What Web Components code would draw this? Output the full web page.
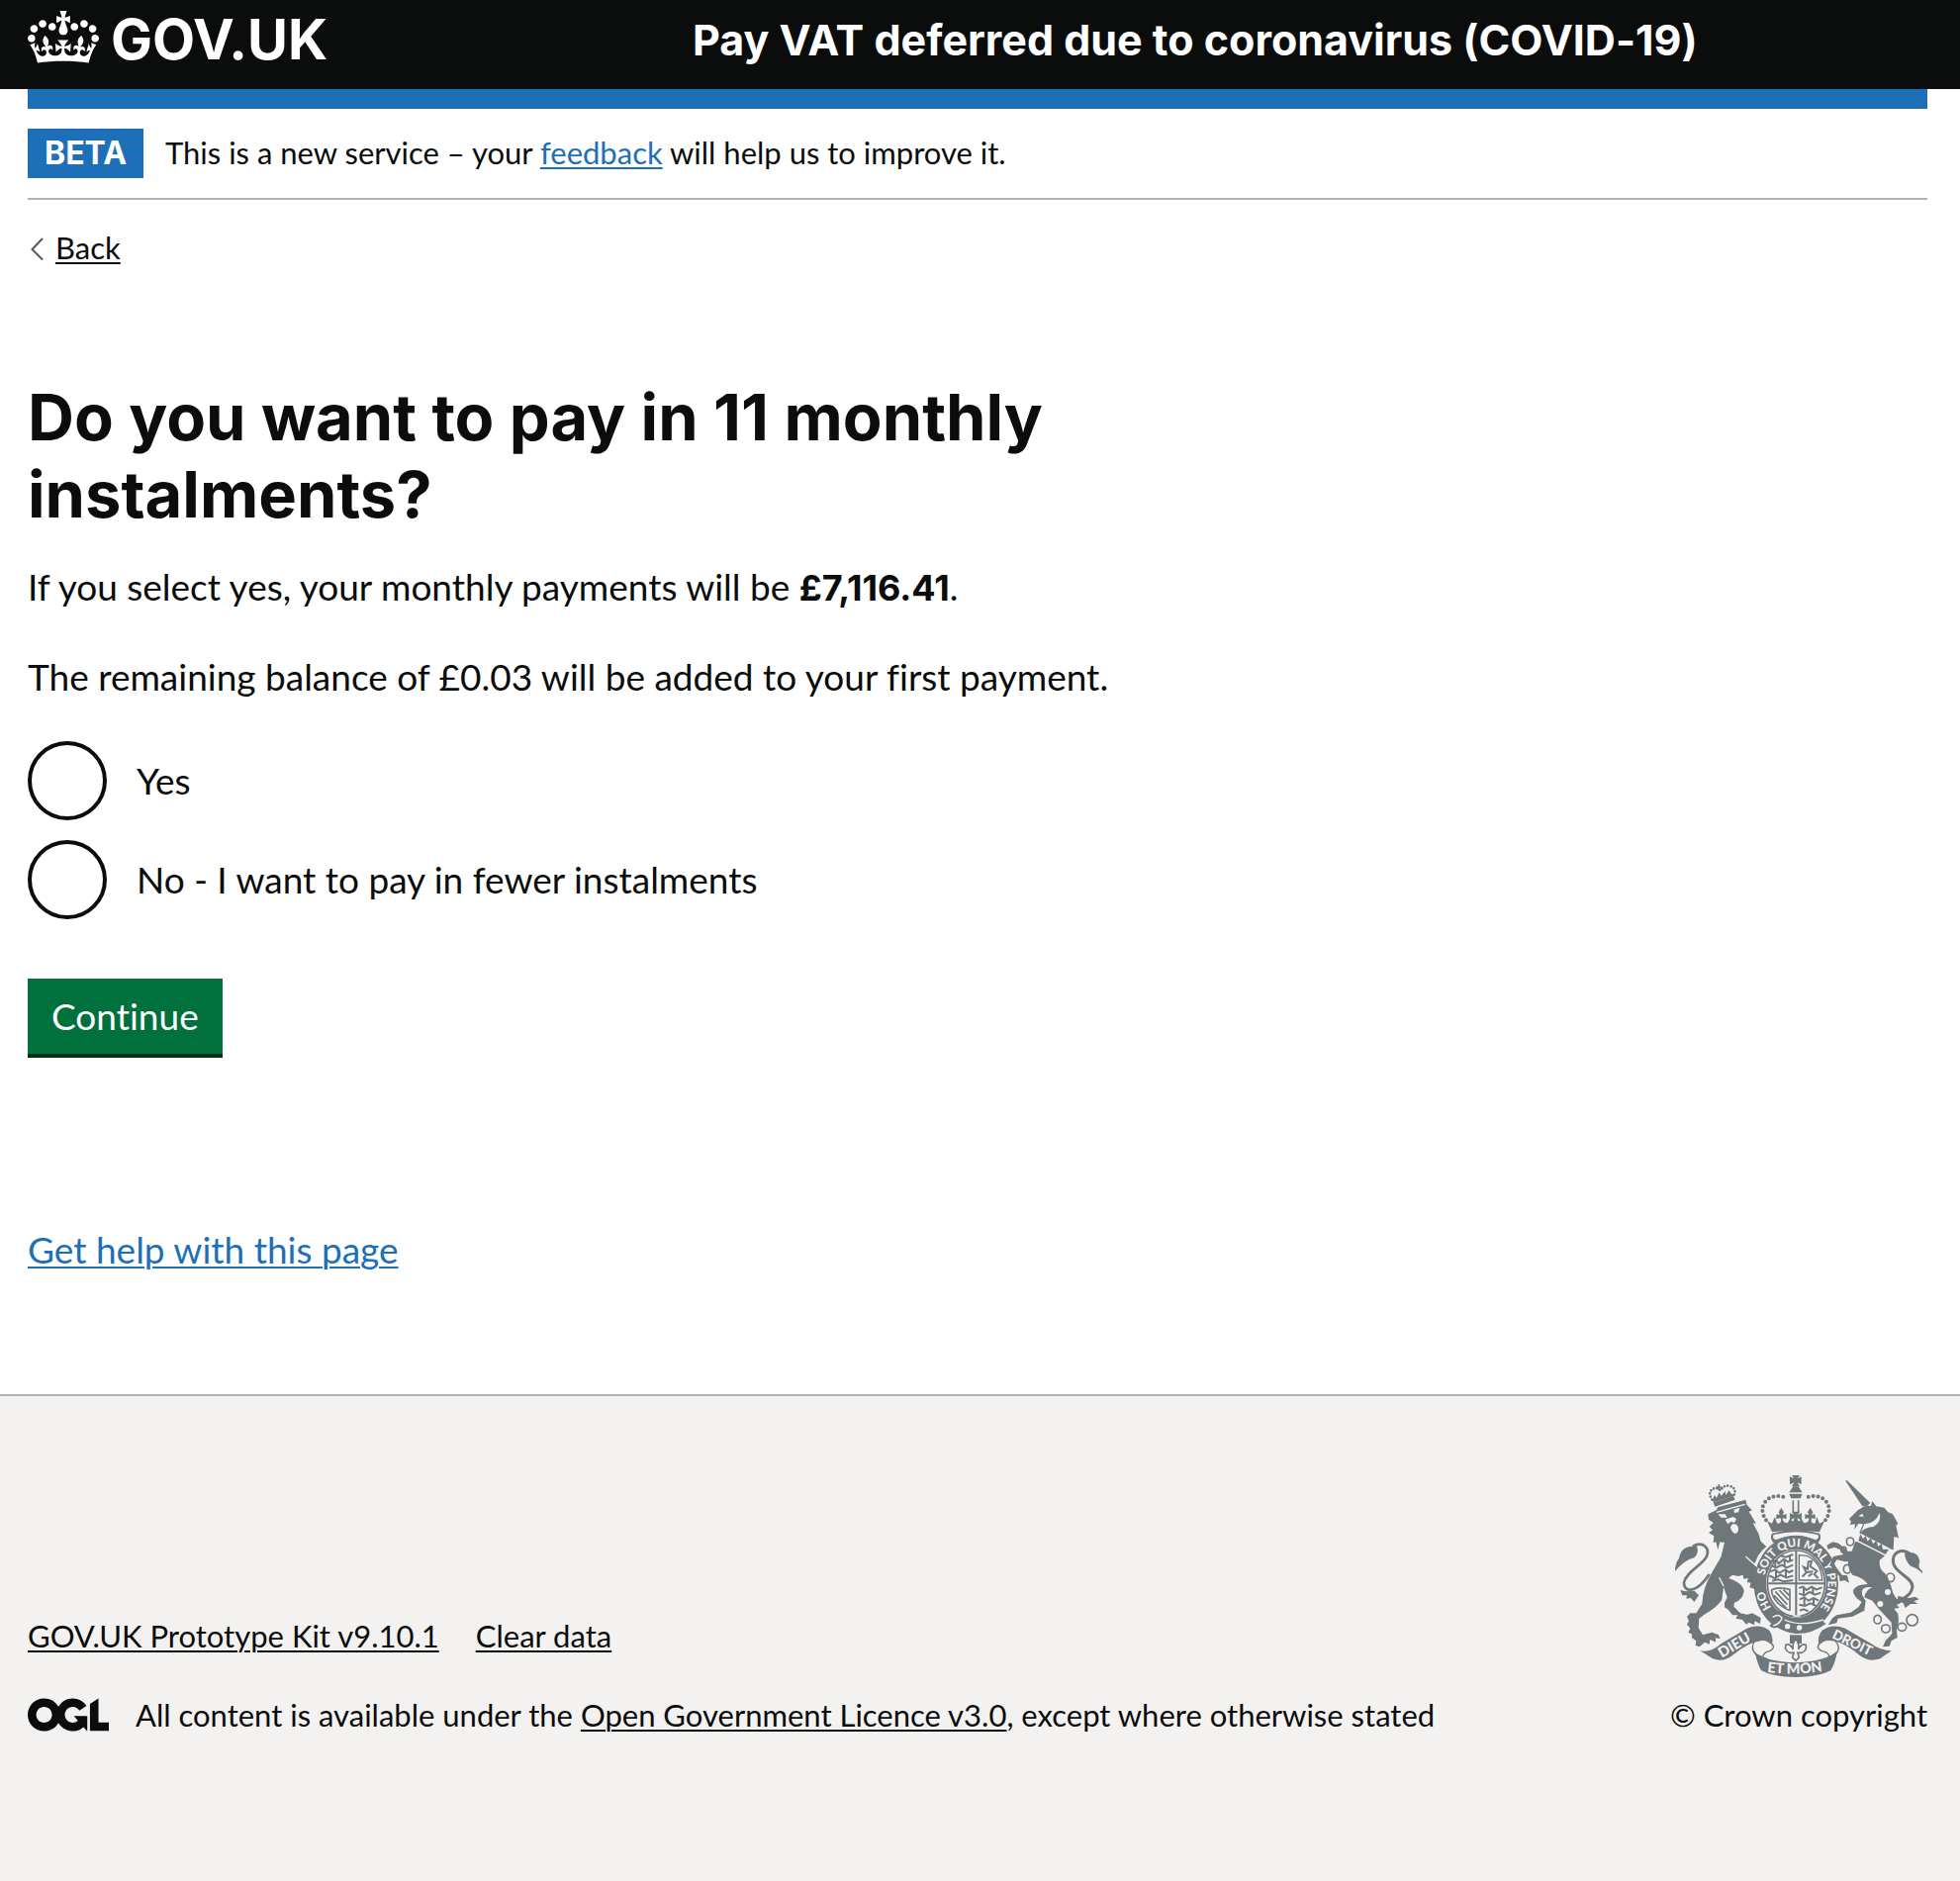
<!DOCTYPE html>
<html lang="en">
<head>
<meta charset="utf-8">
<meta name="viewport" content="width=device-width, initial-scale=1">
<title>Do you want to pay in 11 monthly instalments?</title>
<style>
  :root {
    --ink: #0b0c0c;
    --blue: #1d70b8;
    --green: #00703c;
    --rule: #b1b4b6;
    --panel: #f3f2f1;
    --bold: Inter, "Liberation Sans", sans-serif;
  }
  body {
    margin: 0;
    color: var(--ink);
    background: #fff;
    font-family: Lato, "Liberation Sans", sans-serif;
    font-size: 37px;
    font-variant-ligatures: none;
    line-height: 50px;
  }
</style>
</head>
<body>
<service-page>
  <service-header slot="header">Pay VAT deferred due to coronavirus (COVID-19)</service-header>
  <phase-banner></phase-banner>
  <back-link></back-link>
  <instalment-question>
    <span slot="title">Do you want to pay in 11 monthly instalments?</span>
    <radio-option name="instalments" value="yes">Yes</radio-option>
    <radio-option name="instalments" value="no">No - I want to pay in fewer instalments</radio-option>
  </instalment-question>
  <help-link>Get help with this page</help-link>
  <service-footer slot="footer"></service-footer>
</service-page>

<template id="service-page">
  <style>
    :host { display: flex; flex-direction: column; min-height: 100vh; }
    main { display: block; padding: 0 33px 0 28px; }
    slot[name=footer]::slotted(*) { flex: 1; }
  </style>
  <slot name="header"></slot>
  <main><slot></slot></main>
  <slot name="footer"></slot>
</template>

<template id="service-header">
  <style>
    :host { display: block; background: var(--ink); color: #fff; }
    header { display: flex; align-items: flex-end; padding: 11px 33px 26px 28px; font-family: var(--bold); font-weight: 700; line-height: 48px; }
    .brand { flex: 0 0 35%; }
    a { display: inline-flex; align-items: flex-end; gap: 12px; color: inherit; text-decoration: none; font-size: 56px; vertical-align: bottom; }
    svg { display: block; width: 72px; height: 53px; fill: currentColor; }
    .title { font-size: 43px; }
  </style>
  <header>
    <div class="brand">
      <a href="#"><svg viewBox="0 0 132 97" aria-hidden="true"><path fill-rule="evenodd" d="M25 30.2c3.5 1.5 7.7-.2 9.1-3.7 1.5-3.6-.2-7.8-3.9-9.2-3.6-1.4-7.6.3-9.1 3.9-1.4 3.5.3 7.5 3.9 9zM9 39.5c3.6 1.5 7.8-.2 9.2-3.7 1.5-3.6-.2-7.8-3.9-9.1-3.6-1.5-7.6.2-9.1 3.8-1.4 3.5.3 7.5 3.8 9zM4.4 57.2c3.5 1.5 7.7-.2 9.1-3.8 1.5-3.6-.2-7.7-3.9-9.1-3.5-1.5-7.6.3-9.1 3.8-1.4 3.5.3 7.6 3.9 9.1zm38.3-21.4c3.5 1.5 7.7-.2 9.1-3.8 1.5-3.6-.2-7.7-3.9-9.1-3.6-1.5-7.6.3-9.1 3.8-1.3 3.6.4 7.7 3.9 9.1zm64.4-5.6c-3.6 1.5-7.8-.2-9.1-3.7-1.5-3.6.2-7.8 3.8-9.2 3.6-1.4 7.7.3 9.2 3.9 1.3 3.5-.4 7.5-3.9 9zm15.9 9.3c-3.6 1.5-7.7-.2-9.1-3.7-1.5-3.6.2-7.8 3.7-9.1 3.6-1.5 7.7.2 9.2 3.8 1.5 3.5-.3 7.5-3.8 9zm4.7 17.7c-3.6 1.5-7.8-.2-9.2-3.8-1.5-3.6.2-7.7 3.9-9.1 3.6-1.5 7.7.3 9.2 3.8 1.3 3.5-.4 7.6-3.9 9.1zM89.3 35.8c-3.6 1.5-7.8-.2-9.2-3.8-1.4-3.6.2-7.7 3.9-9.1 3.6-1.5 7.7.3 9.2 3.8 1.4 3.6-.3 7.7-3.9 9.1zM69.7 17.7l8.9 4.7V9.3l-8.9 2.8c-.2-.3-.5-.6-.9-.9L72.4 0H59.6l3.5 11.2c-.3.3-.6.5-.9.9l-8.8-2.8v13.1l8.8-4.7c.3.3.6.7.9.9l-5 15.4v.1c-.2.8-.4 1.6-.4 2.4 0 4.1 3.1 7.5 7 8.1h.2c.3 0 .7.1 1 .1.4 0 .7 0 1-.1h.2c4-.6 7.1-4.1 7.1-8.1 0-.8-.1-1.7-.4-2.4V34l-5.1-15.4c.4-.2.7-.6 1-.9zM66 92.8c16.9 0 32.8 1.1 47.1 3.2 4-16.9 8.9-26.7 14-33.5l-9.6-3.4c1 4.9 1.1 7.2 0 10.2-1.5-1.4-3-4.3-4.2-8.7L108.6 76c2.8-2 5-3.2 7.5-3.3-4.4 9.4-10 11.9-13.6 11.2-4.3-.8-6.3-4.6-5.6-7.9 1-4.7 5.7-5.9 8-.5 4.3-8.7-3-11.4-7.6-8.8 7.1-7.2 7.9-13.5 2.1-21.1-8 6.1-8.1 12.3-4.5 20.8-4.7-5.4-12.1-2.5-9.5 6.2 3.4-5.2 7.9-2 7.2 3.1-.6 4.3-6.4 7.8-13.5 7.2-10.3-.9-10.9-8-11.2-13.8 2.5-.5 7.1 1.8 11 7.3L80.2 60c-4.1 4.4-8 5.3-12.3 5.4 1.4-4.4 8-11.6 8-11.6H55.5s6.4 7.2 7.9 11.6c-4.2-.1-8-1-12.3-5.4l1.4 16.4c3.9-5.5 8.5-7.7 10.9-7.3-.3 5.8-.9 12.8-11.1 13.8-7.2.6-12.9-2.9-13.5-7.2-.7-5 3.8-8.3 7.1-3.1 2.7-8.7-4.6-11.6-9.4-6.2 3.7-8.5 3.6-14.7-4.6-20.8-5.8 7.6-5 13.9 2.2 21.1-4.7-2.6-11.9.1-7.7 8.8 2.3-5.5 7.1-4.2 8.1.5.7 3.3-1.3 7.1-5.7 7.9-3.5.7-9-1.8-13.5-11.2 2.5.1 4.7 1.3 7.5 3.3l-4.7-15.4c-1.2 4.4-2.7 7.2-4.3 8.7-1.1-3-.9-5.3 0-10.2l-9.5 3.4c5 6.9 9.9 16.7 14 33.5 14.8-2.1 30.8-3.2 47.7-3.2z"/></svg><span>GOV.UK</span></a>
    </div>
    <div class="title"><slot></slot></div>
  </header>
</template>

<template id="phase-banner">
  <style>
    :host { display: block; border-top: 20px solid var(--blue); border-bottom: 2px solid var(--rule); padding: 20px 0; }
    div { display: flex; align-items: baseline; gap: 22px; }
    strong { padding: 0 17px; background: var(--blue); color: #fff; font: 700 32px/50px var(--bold); }
    span { font-size: 31px; line-height: 40px; }
    a { color: var(--blue); text-decoration-thickness: 2px; text-underline-offset: 3px; }
  </style>
  <div><strong>BETA</strong><span>This is a new service – your <a href="#">feedback</a> will help us to improve it.</span></div>
</template>

<template id="back-link">
  <style>
    :host { display: block; padding-top: 28px; font-size: 31px; line-height: 40px; }
    a { display: inline-flex; align-items: center; gap: 11px; padding-left: 3px; color: inherit; text-decoration: none; vertical-align: bottom; }
    span { text-decoration: underline 2px; text-underline-offset: 3px; }
    svg { width: 14px; height: 26px; fill: none; stroke: #505a5f; stroke-width: 2; }
  </style>
  <a href="#"><svg viewBox="0 0 14 26" aria-hidden="true"><path d="M12 4 1.500 15 12 25.500"/></svg><span>Back</span></a>
</template>

<template id="instalment-question">
  <style>
    :host { display: block; padding-top: 113px; }
    form, fieldset { margin: 0; padding: 0; border: 0; min-width: 0; }
    h1, p { margin: 0; max-width: 1250px; }
    h1 { padding-bottom: 29px; font: 700 65px/78px var(--bold); }
    p { padding-bottom: 40px; }
    b { font: 700 36px/50px var(--bold); }
    .options { display: flex; flex-direction: column; gap: 20px; padding-bottom: 60px; }
    button { display: block; border: 0; border-bottom: 4px solid #002d18; padding: 13px 24px; background: var(--green); color: #fff; font: inherit; font-variant-ligatures: none; cursor: pointer; }
  </style>
  <form>
    <fieldset aria-labelledby="title">
      <h1 id="title"><slot name="title"></slot></h1>
      <p>If you select yes, your monthly payments will be <b>£7,116.41</b>.</p>
      <p>The remaining balance of £0.03 will be added to your first payment.</p>
      <div class="options"><slot></slot></div>
    </fieldset>
    <button type="button">Continue</button>
  </form>
</template>

<template id="radio-option">
  <style>
    :host { display: block; }
    label { display: inline-flex; align-items: center; gap: 30px; vertical-align: bottom; cursor: pointer; }
    input { appearance: none; box-sizing: border-box; flex: none; width: 80px; height: 80px; margin: 0; border: 4px solid var(--ink); border-radius: 50%; background: #fff; }
    input:checked { background: radial-gradient(var(--ink) 0 20px, #fff 21px); }
  </style>
  <label><input type="radio"><slot></slot></label>
</template>

<template id="help-link">
  <style>
    :host { display: block; padding: 169px 0 121px; }
    a { color: var(--blue); text-decoration-thickness: 2px; text-underline-offset: 3px; }
  </style>
  <a href="#"><slot></slot></a>
</template>

<template id="service-footer">
  <style>
    :host { display: block; border-top: 2px solid var(--rule); background: var(--panel); font-size: 31px; line-height: 40px; }
    footer { display: flex; justify-content: space-between; align-items: flex-end; gap: 40px; padding: 80px 33px 80px 28px; }
    .meta { display: flex; flex-direction: column; gap: 40px; }
    nav { display: flex; gap: 37px; }
    .licence { display: flex; align-items: center; gap: 27px; }
    .licence svg { flex: none; width: 82px; height: 34px; fill: currentColor; }
    a { color: inherit; text-decoration-thickness: 2px; text-underline-offset: 3px; }
    .copyright { display: flex; flex-direction: column; align-items: center; gap: 18px; flex: none; text-decoration: none; }
  </style>
  <footer>
    <div class="meta">
      <nav><a href="#">GOV.UK Prototype Kit v9.10.1</a><a href="#">Clear data</a></nav>
      <div class="licence">
        <svg viewBox="0 0 483.2 195.7" aria-hidden="true"><path d="M421.5 142.8V.1l-50.7 32.3v161.1h112.4v-50.7zm-122.3-9.6A47.12 47.12 0 0 1 221 97.8c0-26 21.1-47.1 47.1-47.1 16.7 0 31.4 8.7 39.7 21.8l42.7-27.2A97.63 97.63 0 0 0 268.1 0c-36.5 0-68.3 20.1-85.1 49.7A98 98 0 0 0 97.800 0C43.900 0 0 43.900 0 97.800s43.900 97.800 97.800 97.800c36.500 0 68.300-20.100 85.100-49.700a97.760 97.760 0 0 0 149.600 25.400l19.400 22.200h3v-87.800h-80l24.300 27.500zM97.800 145c-26 0-47.100-21.100-47.100-47.100s21.100-47.100 47.100-47.100 47.100 21.100 47.100 47.100S123.800 145 97.800 145"/></svg>
        <span>All content is available under the <a href="#">Open Government Licence v3.0</a>, except where otherwise stated</span>
      </div>
    </div>
    <a class="copyright" href="#"><royal-arms></royal-arms><span>© Crown copyright</span></a>
  </footer>
</template>

<template id="royal-arms">
  <style>
    :host { display: block; color: #6f777b; }
    svg { display: block; width: 250px; height: 204px; }
    text { font-family: Lato, "Liberation Sans", sans-serif; font-weight: 900; }
    .solid { fill: currentColor; }
    .line { fill: none; stroke: currentColor; }
    .paper { fill: var(--panel); }
    .cut { fill: none; stroke: var(--panel); }
  </style>
  <svg viewBox="66 60 750 612" aria-hidden="true">
    <!-- lion -->
    <g class="solid">
      <path d="M166 178 192 165 195 157 280 134 284 150 300 166 290 170 312 206 302 205 319 236 326 260 343 276 330 288 318 304 306 330 330 352 342 385 344 408 334 404 328 418 320 406 312 416 306 404 292 400 296 386 284 384 288 372 274 374 272 362 258 366 240 362 228 372Q274 388 275 412 272 438 246 446L244 458 264 478 285 482 300 478 326 492 324 510 308 502 306 514 290 506 282 512 270 498 250 494 256 484 240 484 228 468 216 460 216 446 224 430 213 398 208 438Q190 462 158 480L139 494 137 522 150 544 178 536 198 544 203 556 188 553 190 566 172 558 170 572 156 566 140 580 128 576 130 562 116 552 118 542 106 536 112 524 102 512 108 502 102 488 112 478 130 478 148 450Q150 400 178 354L205 308 216 264 202 262 196 286 190 262 182 264 184 244 168 234 180 226 170 216 182 204 168 194Z"/>
      <path d="M66 351Q66 325 78 312 84 272 132 275 140 294 124 310 96 316 66 351Z"/>
      <path d="M82 408 98 412 125 410 138 424 124 444 114 432 100 434 102 424 88 424Z"/>
      <path d="M182 142 243 123 248 134 187 155Z"/>
      <path d="M180 132 186 120 192 128 200 112 206 122 218 108 220 120 230 106 238 118 244 116 246 122 182 142Z"/>
    </g>
    <g class="line" stroke-width="8">
      <path d="M120 275C150 258 172 280 162 305S100 352 93 385C92 416 130 420 170 360"/>
      <path stroke-width="8" stroke-dasharray="0 10" stroke-linecap="round" d="M178 134Q162 108 186 99 196 98 204 106 212 90 230 92 254 98 245 120"/>
      <path stroke-width="5" d="M199 87V106M190 96H208"/>
    </g>
    <g class="paper">
      <path d="M196 178 218 178 224 188 206 188ZM244 164 262 158 258 172 246 174ZM218 194 242 186 252 192 246 204 236 200 226 208ZM240 208Q258 206 258 224 256 238 246 236 236 230 234 216Z"/>
    </g>
    <g class="cut" stroke-width="4"><path d="M280 306 320 342 340 372M192 172 278 148M213 396 200 370"/></g>

    <!-- central crown -->
    <g class="line">
      <path stroke-width="12" stroke-dasharray="0 15" stroke-linecap="round" d="M342 196Q322 166 338 142 360 112 408 130"/>
      <path stroke-width="12" stroke-dasharray="0 15" stroke-linecap="round" d="M522 196Q542 166 526 142 504 112 456 130"/>
      <path stroke-width="5" d="M424 136V172M440 136V172"/>
    </g>
    <g class="solid">
      <path d="M420 60H444L437 70 449 64V88L437 82 444 94H420L427 82 414 88V64L427 70Z"/>
      <path d="M424 94H440L452 112H412ZM412 116H452L446 130H418Z"/>
      <path d="M345 198 360 206 368 186 376 206Q392 206 386 190L372 192 374 178 384 180 380 172 388 158 396 172 392 180 404 178 404 192 392 190Q392 206 408 204L414 192 424 200 428 188 414 198V174L426 180 420 170H444L438 180 450 174V198L436 188 440 200 450 192 456 204Q472 206 472 190L460 192V178L472 180 468 172 476 158 484 172 480 180 490 178 492 192 480 190Q476 206 490 206L496 186 504 206 519 198 504 232Q432 222 360 232Z"/>
    </g>
    <path class="solid" fill-rule="evenodd" d="M360 236Q432 216 504 236 514 250 496 268 432 234 368 268 350 250 360 236ZM366 240Q358 248 371 256 432 228 493 256 506 248 498 240 432 224 366 240Z"/>

    <!-- garter and shield -->
    <ellipse class="solid" cx="433" cy="390" rx="128" ry="147"/>
    <ellipse class="paper" cx="433" cy="388" rx="91" ry="104"/>
    <ellipse class="line" cx="433" cy="388" rx="87" ry="100" stroke-width="5"/>
    <path class="line" stroke-width="6" d="M433 288V490M345 388H521"/>
    <g class="line" stroke-width="6">
      <path d="M362 322 374 318 380 328 396 314 408 322 424 316M360 334 372 340 390 332 404 340 424 332M354 352 370 346 382 356 400 346 412 354 424 348M352 364 368 372 386 362 404 370 424 364M360 380 378 376 396 382 424 378M386 304 402 308 424 300M370 322V338M398 318V336M372 350V368M402 348V368M414 302V320"/>
      <path d="M442 402 454 398 464 408 480 398 494 406 512 400M442 418 458 424 474 414 490 422 508 416M444 436 458 430 470 440 486 432 502 440M442 452 460 456 476 448 494 456M444 470 456 466 470 472M456 402V420M484 402V420M458 434V452M486 434V452"/>
      <path stroke-width="4" d="M442 302 466 304Q510 324 512 378H442Z"/>
      <path d="M452 368 464 354 456 338 468 344 470 322 480 320 476 336 496 350 488 360 500 372M464 354 484 352M470 366 482 358"/>
      <path stroke-width="5" d="M358 408Q378 396 414 406V470M414 470Q364 450 358 408M370 412 406 452M382 408 410 438M394 406 412 424M366 424 404 464"/>
    </g>
    <defs>
      <path id="garter" d="M358 461A97 112 0 1 1 492 477"/>
      <path id="dieu" d="M208 614 314 552"/>
      <path id="droit" d="M540 552 672 616"/>
      <path id="mon" d="M345 656Q432 668 524 652"/>
    </defs>
    <text class="paper" font-size="35" dx="0 0 0 38"><textPath href="#garter">HO SOIT QUI MAL Y PENSE</textPath></text>
    <path class="solid" d="M356 488 380 470Q404 478 400 500 450 520 512 502L524 510Q480 542 432 540 400 538 380 520 362 528 352 516L366 502Z"/>
    <path class="cut" stroke-width="4" d="M362 490Q380 478 390 492 386 510 364 516M398 498Q446 520 516 498M424 486H446"/>
    <circle class="paper" cx="407" cy="518" r="8"/><circle class="paper" cx="443" cy="522" r="8"/>

    <!-- unicorn -->
    <g class="solid">
      <path d="M582 76 588 76 658 144 648 154 634 154Z"/>
      <path d="M660 152 664 138 676 154 700 158 712 172 726 178 742 206 736 212 744 250 730 246 728 286 714 282 624 236 636 208 622 206 610 224 612 208 596 210 600 200 594 192 620 166 640 154Z"/>
      <path d="M620 262 702 304 686 318Q684 346 702 356 714 370 722 400 724 416 736 432L752 446 738 452 746 462 730 464 742 480 744 500 738 530 740 552 722 562 716 578 696 580 704 562 724 540 722 506 700 482 684 466 664 440 640 430Q642 410 664 400 640 396 634 408 628 420 644 440L640 470 604 488 560 494 556 508 530 514 544 492 556 484 598 476 622 460 632 444Q604 426 606 408 616 390 650 390 640 372 604 362 592 350 590 320L582 322 556 316 548 330 560 346 572 362 588 364 594 386 580 378 566 382 564 366 548 350 536 330 546 306 576 300 572 288 550 278 530 284 526 272 544 262 562 266 590 290 602 290 612 262Z"/>
      <path d="M762 296Q804 286 808 322 800 340 816 350V358Q802 342 782 336 764 322 762 296Z"/>
      <path d="M742 426 776 432 794 428 806 436 790 442 802 450 780 450 764 462 758 448 740 440Z"/>
    </g>
    <path class="line" stroke-width="9" d="M782 300C752 278 722 294 728 326S786 368 786 398C782 426 762 428 742 446"/>
    <!-- coronet collar -->
    <path class="paper" d="M624 234 718 282 706 304 618 260Z"/>
    <path class="solid" d="M628 238 636 252 644 244 650 260 660 250 666 268 676 258 682 276 692 266 696 284 714 284 704 300 622 258Z"/>
    <g class="paper"><path d="M622 184 634 176 638 186ZM686 174Q694 200 668 216 640 218 630 232L640 208Q674 206 686 174Z"/><circle cx="688" cy="450" r="9"/><circle cx="711" cy="414" r="9"/></g>
    <g class="line" stroke-width="5">
      <ellipse cx="597" cy="261" rx="11" ry="12"/><ellipse cx="577" cy="286" rx="8" ry="9"/><ellipse cx="588" cy="344" rx="11" ry="13"/>
      <ellipse cx="719" cy="370" rx="12" ry="13"/><ellipse cx="680" cy="497" rx="11" ry="13"/><ellipse cx="705" cy="525" rx="13" ry="12"/>
      <ellipse cx="754" cy="520" rx="13" ry="12"/><circle cx="785" cy="499" r="17"/>
    </g>

    <!-- motto scroll -->
    <g class="solid">
      <path d="M142 592Q176 598 206 570L284 524Q322 508 352 530 366 550 360 572L340 562Q300 556 240 606 212 628 180 616Z"/>
      <path d="M722 592Q690 592 660 570L582 524Q542 508 512 530 496 550 502 572L522 562Q566 556 626 606 654 628 688 616Z"/>
      <path d="M308 596Q340 624 432 628 526 624 558 592 552 630 538 652 500 672 432 672 362 672 328 652 318 640 308 596Z"/>
      <path d="M414 544H450V570H414Z"/>
    </g>
    <g class="line" stroke-width="4">
      <path d="M308 562Q292 584 312 604L344 616M352 566Q376 580 354 592 328 598 334 616M552 562Q572 584 552 604L522 616M510 566Q488 580 510 592 538 598 532 616"/>
      <path stroke-width="5" style="fill: var(--panel)" d="M432 556Q444 570 440 588 450 568 462 574 468 590 450 598H438L442 612 432 622 422 612 426 598H414Q396 590 402 574 414 568 424 588 420 570 432 556Z"/>
    </g>
    <g class="paper">
      <text font-size="44"><textPath href="#dieu">DIEU</textPath></text>
      <text font-size="41"><textPath href="#droit">DROIT</textPath></text>
      <text font-size="43"><textPath href="#mon">ET MON</textPath></text>
    </g>
  </svg>
</template>

<script>
  class TemplateElement extends HTMLElement {
    constructor() {
      super();
      const template = document.getElementById(this.localName);
      this.attachShadow({ mode: 'open' }).append(template.content.cloneNode(true));
    }
  }

  class RadioOption extends TemplateElement {
    connectedCallback() {
      const input = this.shadowRoot.querySelector('input');
      input.name = this.getAttribute('name');
      input.value = this.getAttribute('value');
      input.addEventListener('change', () => {
        for (const other of this.parentElement.querySelectorAll('radio-option')) {
          if (other !== this) other.shadowRoot.querySelector('input').checked = false;
        }
      });
    }
  }

  customElements.define('royal-arms', class extends TemplateElement {});
  customElements.define('radio-option', RadioOption);
  for (const name of ['service-header', 'phase-banner', 'back-link', 'instalment-question', 'help-link', 'service-footer', 'service-page']) {
    customElements.define(name, class extends TemplateElement {});
  }
</script>
</body>
</html>
